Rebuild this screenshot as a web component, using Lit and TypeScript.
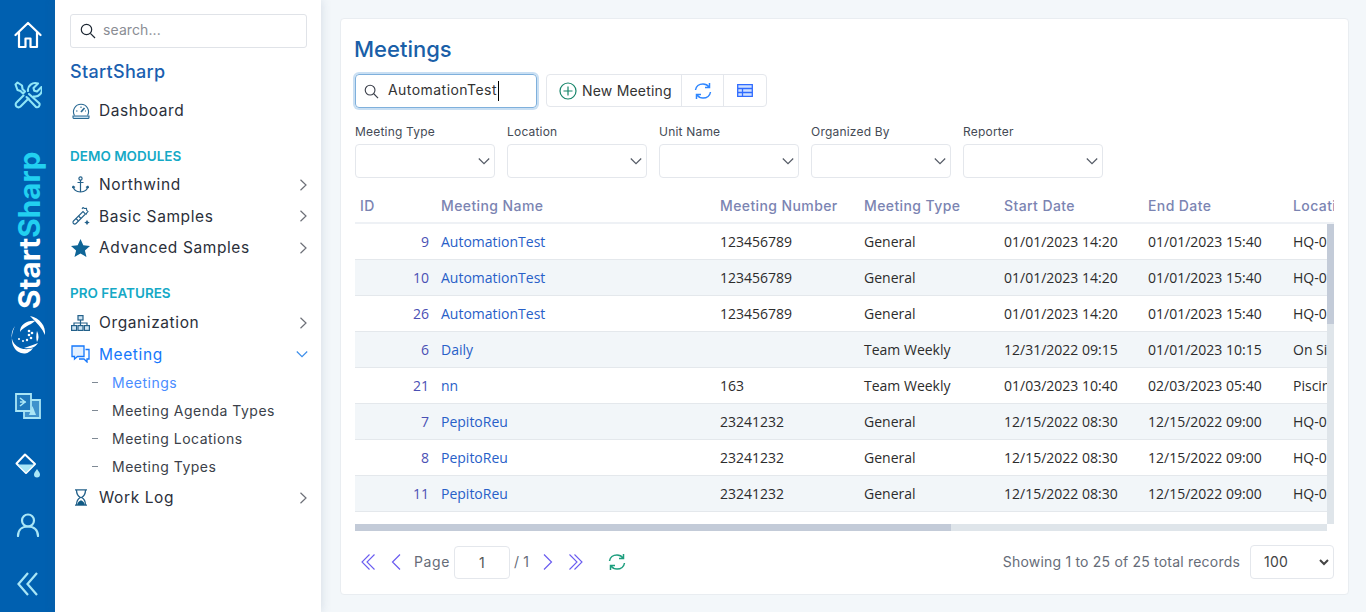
import { LitElement, html, css, svg } from 'lit';
import { customElement } from 'lit/decorators.js';

const chevron = (dir: 'right' | 'down', cls = '') =>
  dir === 'right'
    ? html`<svg class="chev ${cls}" width="8" height="12" viewBox="0 0 8 12" fill="none" stroke="currentColor" stroke-width="1.200"><path d="M1.500 .8 7 6l-5.500 5.200"/></svg>`
    : html`<svg class="chev ${cls}" width="12" height="12" viewBox="0 0 12 12" fill="none" stroke="currentColor" stroke-width="1.200">${svg`<path d="M.8 3.500 6 8.700l5.200-5.200"/>`}</svg>`;

const searchIcon = html`<svg width="16" height="16" viewBox="0 0 16 16" fill="none" stroke="currentColor" stroke-width="1.200"><circle cx="6.500" cy="6.500" r="5.200"/><path d="m10.400 10.400 4.600 4.600"/></svg>`;

const menuIcons: Record<string, unknown> = {
  dashboard: html`<svg width="18" height="16" viewBox="0 0 18 16" fill="none" stroke="#2a6a94" stroke-width="1.100"><path d="M2.500 12.500a7.500 7.500 0 1 1 13 0"/><path d="M1 13h16v1.500a1 1 0 0 1-1 1H2a1 1 0 0 1-1-1z" fill="#c5dff0"/><path d="m9 9 3.500-4" stroke-width="1.600"/><path d="M4 8h1.500M9 3.500V5M14 8h-1"/></svg>`,
  anchor: html`<svg width="17" height="17" viewBox="0 0 17 17" fill="none" stroke="#24618a" stroke-width="1.200"><circle cx="8.500" cy="2.500" r="1.600"/><path d="M8.500 4v12M5.500 6.500h6M1 10c.5 3.500 3.500 5.800 7.500 6 4-.2 7-2.500 7.500-6M1 10l-.5 2M1 10l2 1.500M16 10l.5 2M16 10l-2 1.500"/></svg>`,
  wand: html`<svg width="18" height="18" viewBox="0 0 18 18" fill="none" stroke="#24618a" stroke-width="1.100"><path d="M1.500 14 11 4.500l2.500 2.500L4 16.500a1.500 1.500 0 0 1-2.500-2.500z"/><path d="M4 11.500 6.500 14M6.500 9 9 11.500M10 2l1-1.500 1.500 1 2-.2.200 2 1.300 1.200-1.300 1.500-.5 1.500"/><path d="m15 14 .5 1 1 .5-1 .5-.5 1-.5-1-1-.5 1-.5z" fill="#24618a"/></svg>`,
  star: html`<svg width="19" height="18" viewBox="0 0 19 18"><path fill="#0f6597" d="m9.500 0 2.800 6.300 6.700.6-5.100 4.500 1.600 6.600-6-3.600-6 3.600 1.600-6.600L0 6.900l6.700-.6z"/></svg>`,
  org: html`<svg width="19" height="16" viewBox="0 0 19 16" fill="none" stroke="#24618a" stroke-width="1.200"><rect x="7" y=".6" width="5" height="4.400" fill="#cfe4f2"/><rect x=".6" y="10.600" width="5" height="4.800" fill="#cfe4f2"/><rect x="7" y="10.600" width="5" height="4.800" fill="#cfe4f2"/><rect x="13.400" y="10.600" width="5" height="4.800" fill="#cfe4f2"/><path d="M9.500 5v5.500M3 10.500V8h13v2.500"/></svg>`,
  chat: html`<svg width="19" height="18" viewBox="0 0 19 18" fill="none" stroke="#1577fb" stroke-width="1.300"><path d="M1 1h12v10.500H6.500L3.500 14v-2.500H1z" fill="#e3f0ff"/><path d="M14.500 4.500H18v9.500h-2v3l-3-3H8"/></svg>`,
  hourglass: html`<svg width="14" height="17" viewBox="0 0 14 17" fill="none" stroke="#24618a" stroke-width="1.300"><path d="M1 .8h12M1 16.200h12M2.500 1c0 4 1 6 4 7.500-3 1.500-4 3.500-4 7.500M11.500 1c0 4-1 6-4 7.500 3 1.500 4 3.500 4 7.500"/><path d="M3.200 16c.3-2.500 1.800-4 3.800-4.700 2 .7 3.500 2.200 3.800 4.700z" fill="#0f5a84" stroke="none"/></svg>`,
};

const rowData = [
  [9, 'AutomationTest', '123456789', 'General', '01/01/2023 14:20', '01/01/2023 15:40', 'HQ-01'],
  [10, 'AutomationTest', '123456789', 'General', '01/01/2023 14:20', '01/01/2023 15:40', 'HQ-01'],
  [26, 'AutomationTest', '123456789', 'General', '01/01/2023 14:20', '01/01/2023 15:40', 'HQ-01'],
  [6, 'Daily', '', 'Team Weekly', '12/31/2022 09:15', '01/01/2023 10:15', 'On Site'],
  [21, 'nn', '163', 'Team Weekly', '01/03/2023 10:40', '02/03/2023 05:40', 'Piscine'],
  [7, 'PepitoReu', '23241232', 'General', '12/15/2022 08:30', '12/15/2022 09:00', 'HQ-01'],
  [8, 'PepitoReu', '23241232', 'General', '12/15/2022 08:30', '12/15/2022 09:00', 'HQ-01'],
  [11, 'PepitoReu', '23241232', 'General', '12/15/2022 08:30', '12/15/2022 09:00', 'HQ-01'],
];

const columns = ['ID', 'Meeting Name', 'Meeting Number', 'Meeting Type', 'Start Date', 'End Date', 'Location'];
const filters = ['Meeting Type', 'Location', 'Unit Name', 'Organized By', 'Reporter'];

@customElement('app-root')
export class AppRoot extends LitElement {
  static styles = css`
    :host {
      display: block;
      height: 100vh;
      overflow: hidden;
      font-family: Inter, 'Open Sans', sans-serif;
      color: #2b2f3a;
      background: #f3f7fa;
    }
    * { box-sizing: border-box; }
    .app { display: grid; grid-template-columns: 55px 266px 1fr; height: 100%; }

    .rail {
      background: #0060b0;
      display: flex;
      flex-direction: column;
      align-items: center;
      padding-top: 5px;
      overflow: hidden;
    }
    .rail-ic { height: 60px; display: flex; align-items: center; justify-content: center; flex: none; }
    .rail-ic.tight { height: 59px; }
    .brand {
      writing-mode: vertical-rl;
      transform: rotate(180deg);
      font-weight: 650;
      font-size: 29.700px;
      line-height: 32px;
      height: 157px;
      margin: 27px 0 0 2px;
      color: #fff;
      flex: none;
      white-space: nowrap;
    }
    .brand span { color: #22d0f0; }
    .swirl { margin: 7px 0 0; flex: none; }
    .after-swirl { margin-top: 22px; }

    .side {
      background: #fff;
      box-shadow: 0 0 10px rgba(60, 90, 130, .18);
      padding: 14px 14px 0 15px;
      position: relative;
      z-index: 1;
    }
    .side-search {
      height: 34px;
      border: 1px solid #e0e3e8;
      border-radius: 3px;
      display: flex;
      align-items: center;
      gap: 7px;
      padding-left: 9px;
      color: #1d2733;
    }
    .side-search input {
      border: 0;
      outline: 0;
      width: 180px;
      font: 14px Inter, sans-serif;
      letter-spacing: .1px;
      padding: 0 0 3px;
    }
    .side-search input::placeholder { color: #8a8d94; opacity: 1; }
    .side-title {
      font-size: 18px;
      line-height: 24px;
      margin-top: 12px;
      font-weight: 500;
      color: #1a5fb0;
      letter-spacing: .3px;
    }
    .item {
      height: 31.500px;
      display: flex;
      align-items: center;
      font-size: 15.500px;
      font-weight: 400;
      letter-spacing: .6px;
      white-space: nowrap;
    }
    .item.first { margin-top: 11px; }
    .item.active { color: #1577fb; }
    .item-ic { width: 30px; display: flex; justify-content: center; padding-right: 7px; flex: none; margin-left: -1px; }
    .item .chev { margin-left: auto; color: #6d7078; }
    .item.active .chev { color: #3d8eea; margin-right: -1px; }
    .section {
      height: 20px;
      line-height: 20px;
      margin-top: 19px;
      margin-bottom: 3.250px;
      font-size: 13.500px;
      font-weight: 600;
      color: #15a9c6;
    }
    .section.pro { margin-top: 19.500px; margin-bottom: 4px; }
    .subs { margin: -1px 0 1px; }
    .sub {
      height: 28px;
      display: flex;
      align-items: center;
      font-size: 14px;
      letter-spacing: .5px;
      color: #3b3f4a;
      padding-left: 22px;
      white-space: nowrap;
    }
    .sub::before {
      content: '';
      width: 6px;
      height: 1px;
      background: #7f8a95;
      margin-right: 14px;
      flex: none;
    }
    .sub.active { color: #4a8cff; }

    .main { padding: 18px 17px 17px 19px; min-width: 0; }
    .card {
      height: 100%;
      background: #fff;
      border: 1px solid #e9edf1;
      border-radius: 4px;
      padding: 15px 14px 0;
      display: flex;
      flex-direction: column;
      min-width: 0;
    }
    h1 {
      margin: 0 0 0 -1px;
      font-size: 22px;
      line-height: 30px;
      font-weight: 500;
      color: #1a5fa8;
    }
    .toolbar { display: flex; gap: 9px; margin-top: 10px; height: 34px; }
    .quick {
      width: 182px;
      border: 1px solid #7fb0dc;
      border-radius: 4px;
      box-shadow: 0 0 0 2px rgba(120, 175, 225, .4);
      display: flex;
      align-items: center;
      padding: 0 0 3px 8px;
      font-size: 14px;
      letter-spacing: .45px;
      color: #333;
    }
    .quick svg { margin: 3px 9px 0 0; color: #3b3f4a; flex: none; width: 15px; height: 15px; }
    .caret { width: 1px; height: 20px; background: #000; margin: 3px 0 0 1px; }
    .btns {
      display: flex;
      border: 1px solid #e4e7ec;
      border-radius: 4px;
      height: 33px;
    }
    .btn { display: flex; align-items: center; justify-content: center; border-left: 1px solid #e4e7ec; width: 42px; }
    .btn:first-child { border-left: 0; width: 134px; gap: 5px; justify-content: flex-start; padding-left: 12px; font-size: 14px; letter-spacing: .2px; color: #333; }
    .btn:last-child { width: 43px; }
    .btn-text { padding-bottom: 1px; }

    .filters { display: flex; gap: 12px; margin-top: 16px; }
    .filter { width: 140px; }
    .filter label { display: block; font-size: 12px; line-height: 16px; letter-spacing: .2px; color: #444a55; margin-bottom: 4px; }
    .select {
      height: 34px;
      border: 1px solid #e4e7ec;
      border-radius: 4px;
      display: flex;
      align-items: center;
      justify-content: flex-end;
      padding-right: 4px;
      color: #555b66;
    }

    .grid { margin-top: 10px; flex: none; width: 979px; }
    .cols { display: grid; grid-template-columns: 80px 279px 144px 140px 144px 145px 653px; }
    .head { overflow: hidden; height: 36px; border-bottom: 2px solid #eef1f5; }
    .head .cols { width: 1585px; height: 34px; align-items: center; font-size: 14px; font-weight: 500; color: #7b84b2; letter-spacing: .4px; }
    .head .cols > div { padding-left: 5px; white-space: nowrap; }
    .head .cols > div:nth-child(n + 2) { padding-left: 6px; }
    .body { display: grid; grid-template-columns: 972px 7px; grid-template-rows: 300px 7px; }
    .viewport { overflow: hidden; }
    .track { background: #dfe5ea; display: flex; }
    .thumb { background: #c3cbd8; }
    .track.v .thumb { width: 100%; height: 100px; }
    .track.h .thumb { height: 100%; width: 596px; }
    .rows { width: 1585px; }
    .row {
      height: 36px;
      align-items: center;
      border-bottom: 1px solid #e4e8ec;
      font-family: 'Open Sans', sans-serif;
      font-size: 14px;
      color: #2c2c2c;
    }
    .row:nth-child(even) { background: #f2f6f9; }
    .row > div { padding-left: 6px; white-space: nowrap; }
    .row .id { text-align: right; padding-right: 6px; padding-left: 0; color: #4a50b4; }
    .row .name { color: #2860c8; }

    .pager { display: flex; align-items: center; margin-top: 14px; height: 34px; padding-left: 6px; font-size: 14px; letter-spacing: .2px; color: #666c78; }
    .pg { display: flex; color: #6a5cf0; flex: none; }
    .pg.prev { margin-left: 16px; }
    .pg.next { margin-left: 14px; }
    .pg.last { margin-left: 16px; }
    .pg.reload { margin-left: 25px; color: #1e9e7e; }
    .label { padding-bottom: 2px; }
    .label.page { margin-left: 13px; letter-spacing: .6px; }
    .page-input {
      width: 56px;
      height: 33px;
      border: 1px solid #e4e7ec;
      border-radius: 4px;
      text-align: center;
      font: 14px Inter, sans-serif;
      color: #555;
      margin: 0 4px;
      padding: 0;
      outline: 0;
    }
    .status { margin-left: auto; margin-right: 10px; }
    .size {
      width: 84px;
      height: 34px;
      border: 1px solid #e4e7ec;
      border-radius: 4px;
      display: flex;
      align-items: center;
      justify-content: space-between;
      padding: 0 3px 1px 13px;
      color: #444;
    }
  `;

  renderRail() {
    return html`<nav class="rail">
      <div class="rail-ic"><svg width="28" height="28" viewBox="0 0 28 28" fill="none" stroke="#fff" stroke-width="2.200" stroke-linejoin="round" stroke-linecap="round"><path d="M1.500 14 14 2l12.500 12M5 11v15h6.500v-8.500h5V26H23V11"/></svg></div>
      <div class="rail-ic"><svg width="28" height="28" viewBox="0 0 28 28" fill="none" stroke="#8fe6f7" stroke-width="2.100" stroke-linejoin="round" stroke-linecap="round"><path d="M1.500 3.500 3.500 1.500 8 4.500 8.500 8 11 10.500 9 12.500 6.500 10 3.500 9z"/><path d="M15 13 25.500 22.500A2.700 2.700 0 0 1 22 26L12.500 16"/><path d="M9.500 14.500 2.500 21.500a2.800 2.800 0 0 0 4 4l8-8M14 10c-.8-5 4.500-9.500 10-7.500L19.500 7l.7 2.800 2.800.7 4.500-4.500c2 5.500-3 10.500-8 9.500"/></svg></div>
      <div class="brand">Start<span>Sharp</span></div>
      <svg class="swirl" width="38" height="38" viewBox="-19 -19 38 38" fill="#fff">
        <path d="M2-19C12-17 18-9 17 0 14-7 9-12 2-19Z"/>
        <path d="M-13-9C-19-1-17 9-8 13-3 15 2 14 5 13 1 19-4 19-7 18-16 15-19 3-13-9Z"/>
        <path d="M7-14C0-15-8-11-8-3-5-8 1-9 7-14Z"/>
        <path d="M10 8C7 13 1 14-4 13 1 11 6 10 10 8Z"/>
        <path d="M9-4C11 0 11 4 9 7 8 4 8 0 9-4Z"/>
        <circle cx="1" cy="-4" r="1.300"/><circle cx="4" cy="-2" r="1.300"/><circle cx="1" cy="0" r="1.300"/><circle cx="3" cy="3" r="1.300"/><circle cx="-1" cy="5" r="1.200"/><circle cx="-5" cy="6" r="1"/><circle cx="-9" cy="4" r="1"/>
      </svg>
      <div class="rail-ic after-swirl"><svg width="26" height="26" viewBox="0 0 26 26" fill="none" stroke="#a9e6f6" stroke-width="1.800"><path d="M9 7h16v18H9z" fill="#3f93cc"/><path d="M1 1h15v17H1z" fill="#1f79bd"/><path d="m5 5 5 4-5 4M5 9h6" stroke-width="1.600"/><path d="m14 22 3.500-9 3.500 9z" fill="#a9e6f6" stroke="none"/></svg></div>
      <div class="rail-ic tight"><svg width="26" height="26" viewBox="0 0 26 26" fill="none" stroke="#fff" stroke-width="2"><path d="M10 1.500 1.500 10.500 11 20l9-9z" stroke-linejoin="round"/><path d="M2.500 11.500H19L11 19.500z" fill="#a9e6f6" stroke="none"/><path d="M22 16c-2 3-3 4-3 5.500a3 3 0 0 0 6 0c0-1.500-1-2.500-3-5.500z" fill="#a9e6f6" stroke="none"/></svg></div>
      <div class="rail-ic tight"><svg width="24" height="24" viewBox="0 0 24 24" fill="none" stroke="#a9e6f6" stroke-width="2.200"><circle cx="12" cy="7.500" r="6"/><path d="M2 23c0-6 4-9.500 10-9.500S22 17 22 23" stroke-linecap="round"/></svg></div>
      <div class="rail-ic tight"><svg width="22" height="24" viewBox="0 0 22 24" fill="none" stroke="#a9e6f6" stroke-width="2.200"><path d="M11 1 1.500 12 11 23M20 1l-9.500 11L20 23"/></svg></div>
    </nav>`;
  }

  renderItem(label: string, icon: string, opts: { active?: boolean; open?: boolean; leaf?: boolean; first?: boolean } = {}) {
    return html`<div class="item ${opts.active ? 'active' : ''} ${opts.first ? 'first' : ''}">
      <span class="item-ic">${menuIcons[icon]}</span>${label}
      ${opts.leaf ? '' : chevron(opts.open ? 'down' : 'right')}
    </div>`;
  }

  renderSide() {
    return html`<aside class="side">
      <div class="side-search">${searchIcon}<input placeholder="search..." /></div>
      <div class="side-title">StartSharp</div>
      ${this.renderItem('Dashboard', 'dashboard', { leaf: true, first: true })}
      <div class="section">DEMO MODULES</div>
      ${this.renderItem('Northwind', 'anchor')}
      ${this.renderItem('Basic Samples', 'wand')}
      ${this.renderItem('Advanced Samples', 'star')}
      <div class="section pro">PRO FEATURES</div>
      ${this.renderItem('Organization', 'org')}
      ${this.renderItem('Meeting', 'chat', { active: true, open: true })}
      <div class="subs">
        <div class="sub active">Meetings</div>
        <div class="sub">Meeting Agenda Types</div>
        <div class="sub">Meeting Locations</div>
        <div class="sub">Meeting Types</div>
      </div>
      ${this.renderItem('Work Log', 'hourglass')}
    </aside>`;
  }

  renderGrid() {
    return html`<div class="grid">
      <div class="head"><div class="cols">${columns.map((c) => html`<div>${c}</div>`)}</div></div>
      <div class="body">
        <div class="viewport"><div class="rows">
          ${rowData.map((r) => html`<div class="cols row">
            <div class="id">${r[0]}</div>
            <div class="name">${r[1]}</div>
            ${r.slice(2).map((v) => html`<div>${v}</div>`)}
          </div>`)}
        </div></div>
        <div class="track v"><div class="thumb"></div></div>
        <div class="track h"><div class="thumb"></div></div>
      </div>
    </div>`;
  }

  renderPager() {
    const dbl = (d: string, cls: string) => html`<span class="pg ${cls}"><svg width="14" height="16" viewBox="0 0 14 16" fill="none" stroke="currentColor" stroke-width="1.100"><path d="${d}"/></svg></span>`;
    return html`<div class="pager">
      ${dbl('M8.500.5 1 8l7.500 7.500M13.500.5 6 8l7.500 7.500', '')}
      <span class="pg prev"><svg width="10" height="16" viewBox="0 0 10 16" fill="none" stroke="currentColor" stroke-width="1.200"><path d="M9 .5 1.500 8 9 15.500"/></svg></span>
      <span class="label page">Page</span>
      <input class="page-input" value="1" />
      <span class="label">/ 1</span>
      <span class="pg next"><svg width="10" height="16" viewBox="0 0 10 16" fill="none" stroke="currentColor" stroke-width="1.200"><path d="m1 .5 7.500 7.500L1 15.500"/></svg></span>
      ${dbl('M.5.5 8 8 .5 15.500M5.500.5 13 8l-7.500 7.500', 'last')}
      <span class="pg reload"><svg width="18" height="18" viewBox="0 0 18 18" fill="none" stroke="currentColor" stroke-width="1.500"><path d="M1.500 8C2 4.500 5 2 9 2c2.500 0 4.500 1 6 3M16.500 10c-.5 3.500-3.500 6-7.500 6-2.500 0-4.500-1-6-3"/><path d="M15.500 1v4.500H11M2.500 17v-4.500H7"/></svg></span>
      <span class="label status">Showing 1 to 25 of 25 total records</span>
      <div class="size">100<svg width="12" height="12" viewBox="0 0 12 12" fill="none" stroke="#444" stroke-width="2"><path d="m2 4 4 4 4-4"/></svg></div>
    </div>`;
  }

  render() {
    return html`<div class="app">
      ${this.renderRail()}
      ${this.renderSide()}
      <main class="main"><section class="card">
        <h1>Meetings</h1>
        <div class="toolbar">
          <div class="quick">${searchIcon}AutomationTest<span class="caret"></span></div>
          <div class="btns">
            <div class="btn"><svg width="18" height="18" viewBox="0 0 18 18" fill="none" stroke="#17856a" stroke-width="1.200"><circle cx="9" cy="9" r="8"/><path d="M9 4.500v9M4.500 9h9"/></svg><span class="btn-text">New Meeting</span></div>
            <div class="btn"><svg width="18" height="18" viewBox="0 0 18 18" fill="none" stroke="#2e86ff" stroke-width="1.500"><path d="M1.500 8C2 4.500 5 2 9 2c2.500 0 4.500 1 6 3M16.500 10c-.5 3.500-3.500 6-7.500 6-2.500 0-4.500-1-6-3"/><path d="M15.500 1v4.500H11M2.500 17v-4.500H7"/></svg></div>
            <div class="btn"><svg width="16" height="13" viewBox="0 0 16 13" fill="#cfe0ff" stroke="#2f6bff" stroke-width="1.300"><path d="M.7.700h14.600v11.600H.7zM.7 4.500h14.600M.7 8.500h14.600M5.500 4.500v7.800"/></svg></div>
          </div>
        </div>
        <div class="filters">
          ${filters.map((f) => html`<div class="filter"><label>${f}</label><div class="select">${chevron('down')}</div></div>`)}
        </div>
        ${this.renderGrid()}
        ${this.renderPager()}
      </section></main>
    </div>`;
  }
}
